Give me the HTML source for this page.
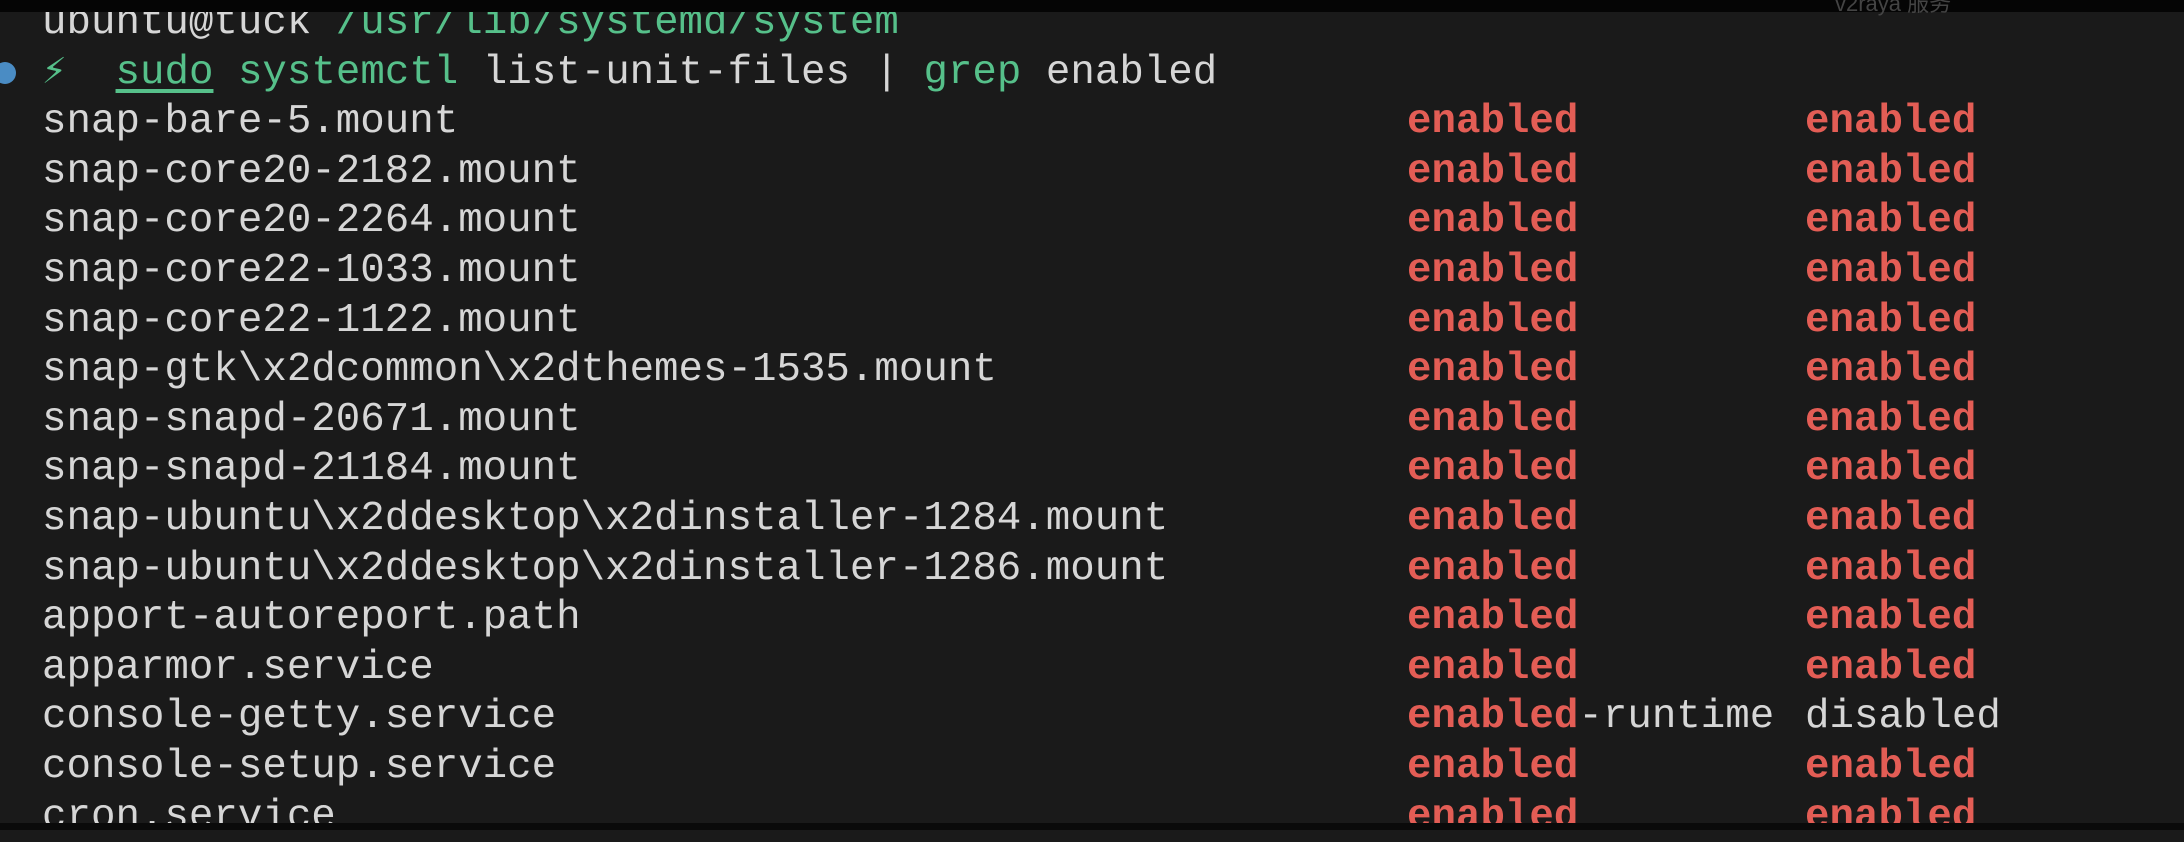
<!DOCTYPE html>
<html><head><meta charset="utf-8"><style>
html,body{margin:0;padding:0;width:2184px;height:830px;overflow:hidden;background:#1a1a1a;}
pre{position:absolute;left:42px;top:-1px;margin:0;font-family:"Liberation Mono","DejaVu Sans Mono",monospace;font-size:40.8px;line-height:49.6px;color:#d6d6d6;}
.g{color:#56c08a}.r{color:#e35d55;font-weight:bold}
.u{text-decoration:underline;text-underline-offset:6px}
.a{display:inline-block;width:1365px}.b{display:inline-block;width:398px}
#top{position:absolute;left:0;top:0;width:2184px;height:12px;background:#050505;}
#bot{position:absolute;left:0;top:823px;width:2184px;height:7px;background:#0a0a0a;}
#dot{position:absolute;left:-6px;top:62px;width:22px;height:22px;border-radius:50%;background:#4a8cc4;}
#tt{position:absolute;left:1835px;top:-14px;font:22px "Liberation Sans","Noto Sans CJK SC",sans-serif;color:#444;}
</style></head><body>
<pre>ubuntu@tuck <span class="g">/usr/lib/systemd/system</span>
<span class="g">⚡</span>  <span class="g u">sudo</span> <span class="g">systemctl</span> list-unit-files | <span class="g">grep</span> enabled
<span class="a">snap-bare-5.mount</span><span class="b r">enabled</span><span class="r">enabled</span>
<span class="a">snap-core20-2182.mount</span><span class="b r">enabled</span><span class="r">enabled</span>
<span class="a">snap-core20-2264.mount</span><span class="b r">enabled</span><span class="r">enabled</span>
<span class="a">snap-core22-1033.mount</span><span class="b r">enabled</span><span class="r">enabled</span>
<span class="a">snap-core22-1122.mount</span><span class="b r">enabled</span><span class="r">enabled</span>
<span class="a">snap-gtk\x2dcommon\x2dthemes-1535.mount</span><span class="b r">enabled</span><span class="r">enabled</span>
<span class="a">snap-snapd-20671.mount</span><span class="b r">enabled</span><span class="r">enabled</span>
<span class="a">snap-snapd-21184.mount</span><span class="b r">enabled</span><span class="r">enabled</span>
<span class="a">snap-ubuntu\x2ddesktop\x2dinstaller-1284.mount</span><span class="b r">enabled</span><span class="r">enabled</span>
<span class="a">snap-ubuntu\x2ddesktop\x2dinstaller-1286.mount</span><span class="b r">enabled</span><span class="r">enabled</span>
<span class="a">apport-autoreport.path</span><span class="b r">enabled</span><span class="r">enabled</span>
<span class="a">apparmor.service</span><span class="b r">enabled</span><span class="r">enabled</span>
<span class="a">console-getty.service</span><span class="b"><span class="r">enabled</span>-runtime</span>disabled
<span class="a">console-setup.service</span><span class="b r">enabled</span><span class="r">enabled</span>
<span class="a">cron.service</span><span class="b r">enabled</span><span class="r">enabled</span></pre>
<div id="top"></div><div id="tt">v2raya 服务</div>
<div id="bot"></div>
<div id="dot"></div>
</body></html>
